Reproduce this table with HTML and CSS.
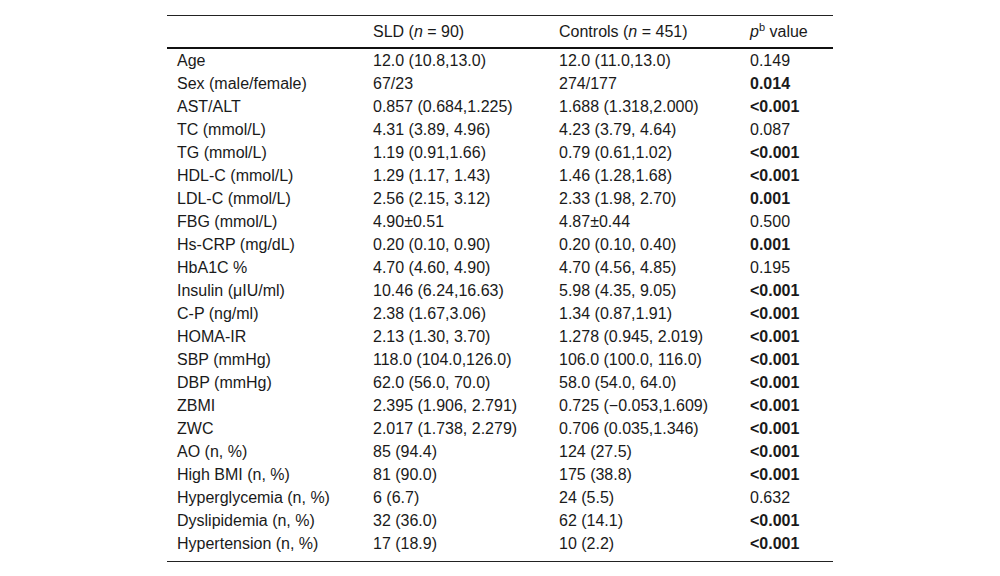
FILE: index.html
```html
<!DOCTYPE html>
<html>
<head>
<meta charset="utf-8">
<link rel="stylesheet" href="styles.css">
</head>
<body>
<table class="data">
  <thead>
    <tr>
      <th class="c1"></th>
      <th class="c2">SLD (<i>n</i> = 90)</th>
      <th class="c3">Controls (<i>n</i> = 451)</th>
      <th class="c4"><i>p</i><sup>b</sup> value</th>
    </tr>
  </thead>
  <tbody>
    <tr><td>Age</td><td>12.0 (10.8,13.0)</td><td>12.0 (11.0,13.0)</td><td>0.149</td></tr>
    <tr><td>Sex (male/female)</td><td>67/23</td><td>274/177</td><td><b>0.014</b></td></tr>
    <tr><td>AST/ALT</td><td>0.857 (0.684,1.225)</td><td>1.688 (1.318,2.000)</td><td><b>&lt;0.001</b></td></tr>
    <tr><td>TC (mmol/L)</td><td>4.31 (3.89, 4.96)</td><td>4.23 (3.79, 4.64)</td><td>0.087</td></tr>
    <tr><td>TG (mmol/L)</td><td>1.19 (0.91,1.66)</td><td>0.79 (0.61,1.02)</td><td><b>&lt;0.001</b></td></tr>
    <tr><td>HDL-C (mmol/L)</td><td>1.29 (1.17, 1.43)</td><td>1.46 (1.28,1.68)</td><td><b>&lt;0.001</b></td></tr>
    <tr><td>LDL-C (mmol/L)</td><td>2.56 (2.15, 3.12)</td><td>2.33 (1.98, 2.70)</td><td><b>0.001</b></td></tr>
    <tr><td>FBG (mmol/L)</td><td>4.90±0.51</td><td>4.87±0.44</td><td>0.500</td></tr>
    <tr><td>Hs-CRP (mg/dL)</td><td>0.20 (0.10, 0.90)</td><td>0.20 (0.10, 0.40)</td><td><b>0.001</b></td></tr>
    <tr><td>HbA1C %</td><td>4.70 (4.60, 4.90)</td><td>4.70 (4.56, 4.85)</td><td>0.195</td></tr>
    <tr><td>Insulin (μIU/ml)</td><td>10.46 (6.24,16.63)</td><td>5.98 (4.35, 9.05)</td><td><b>&lt;0.001</b></td></tr>
    <tr><td>C-P (ng/ml)</td><td>2.38 (1.67,3.06)</td><td>1.34 (0.87,1.91)</td><td><b>&lt;0.001</b></td></tr>
    <tr><td>HOMA-IR</td><td>2.13 (1.30, 3.70)</td><td>1.278 (0.945, 2.019)</td><td><b>&lt;0.001</b></td></tr>
    <tr><td>SBP (mmHg)</td><td>118.0 (104.0,126.0)</td><td>106.0 (100.0, 116.0)</td><td><b>&lt;0.001</b></td></tr>
    <tr><td>DBP (mmHg)</td><td>62.0 (56.0, 70.0)</td><td>58.0 (54.0, 64.0)</td><td><b>&lt;0.001</b></td></tr>
    <tr><td>ZBMI</td><td>2.395 (1.906, 2.791)</td><td>0.725 (−0.053,1.609)</td><td><b>&lt;0.001</b></td></tr>
    <tr><td>ZWC</td><td>2.017 (1.738, 2.279)</td><td>0.706 (0.035,1.346)</td><td><b>&lt;0.001</b></td></tr>
    <tr><td>AO (n, %)</td><td>85 (94.4)</td><td>124 (27.5)</td><td><b>&lt;0.001</b></td></tr>
    <tr><td>High BMI (n, %)</td><td>81 (90.0)</td><td>175 (38.8)</td><td><b>&lt;0.001</b></td></tr>
    <tr><td>Hyperglycemia (n, %)</td><td>6 (6.7)</td><td>24 (5.5)</td><td>0.632</td></tr>
    <tr><td>Dyslipidemia (n, %)</td><td>32 (36.0)</td><td>62 (14.1)</td><td><b>&lt;0.001</b></td></tr>
    <tr class="last"><td>Hypertension (n, %)</td><td>17 (18.9)</td><td>10 (2.2)</td><td><b>&lt;0.001</b></td></tr>
  </tbody>
</table>
</body>
</html>
```
FILE: styles.css
```css
html, body {
  margin: 0;
  padding: 0;
  background: #fff;
}
body {
  padding-top: 15px;
  font-family: "Liberation Sans", Arial, sans-serif;
  font-size: 16px;
  color: #1a1a1a;
}
.data {
  width: 666px;
  margin: 0 auto;
  border-collapse: collapse;
  border-top: 1px solid #222;
  border-bottom: 1px solid #222;
  table-layout: fixed;
}
.data th, .data td {
  padding: 0 10px;
  text-align: left;
  white-space: nowrap;
  vertical-align: middle;
  line-height: 18px;
}
.data th {
  font-weight: normal;
  height: 31px;
  border-bottom: 2px solid #111;
}
.data td {
  height: 23px;
}
.data .c1 { width: 176px; }
.data .c2 { width: 166px; }
.data .c3 { width: 171px; }
.data .c4 { width: 73px; }
.data sup {
  font-size: 11px;
  line-height: 0;
  vertical-align: 6px;
}
.data b {
  font-weight: bold;
}
.data tr.last td {
  height: 23px;
  padding-bottom: 6px;
}
```
